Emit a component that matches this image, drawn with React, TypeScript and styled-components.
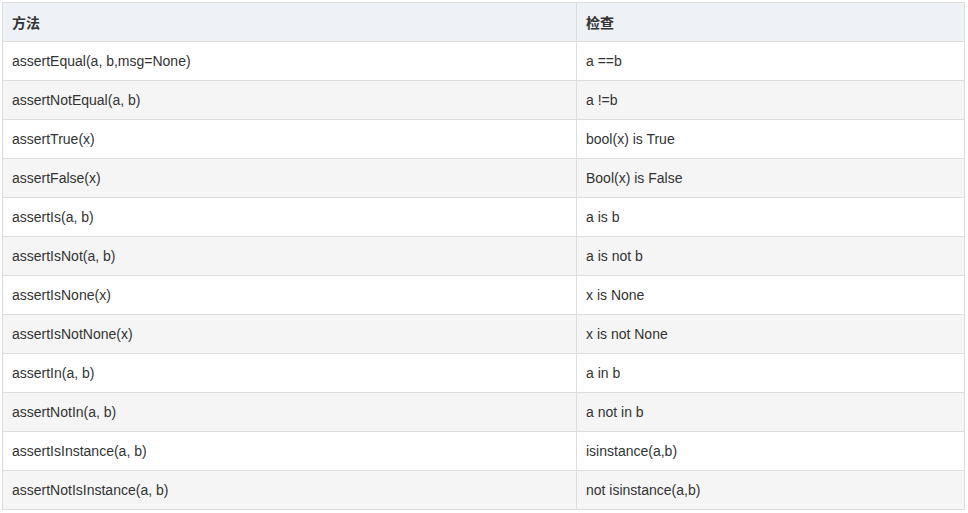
import React from "react";
import styled, { createGlobalStyle } from "styled-components";

const Global = createGlobalStyle`
  html, body { margin: 0; padding: 0; background: #ffffff; }
  body { font-family: "Liberation Sans", Arial, "Noto Sans CJK SC", sans-serif; }
`;

const Page = styled.div`
  padding: 2px 0 0 2px;
`;

const Table = styled.table`
  border-collapse: collapse;
  table-layout: fixed;
  width: 963px;
  border: 1px solid #dddddd;
  font-size: 14px;
  color: #333333;
`;

const HeadCell = styled.th`
  height: 39px;
  padding: 0 9px;
  box-sizing: border-box;
  text-align: left;
  font-weight: bold;
  font-family: "Liberation Sans", Arial, "Noto Sans CJK SC", sans-serif;
  background: #eef1f5;
  border: 1px solid #dddddd;
`;

const Row = styled.tr<{ $striped: boolean }>`
  background: ${(p) => (p.$striped ? "#f5f5f5" : "#ffffff")};
`;

const Cell = styled.td`
  height: 39px;
  padding: 0 9px;
  box-sizing: border-box;
  border: 1px solid #dddddd;
  white-space: nowrap;
`;

const rows: [string, string][] = [
  ["assertEqual(a, b,msg=None)", "a ==b"],
  ["assertNotEqual(a, b)", "a !=b"],
  ["assertTrue(x)", "bool(x) is True"],
  ["assertFalse(x)", "Bool(x) is False"],
  ["assertIs(a, b)", "a is b"],
  ["assertIsNot(a, b)", "a is not b"],
  ["assertIsNone(x)", "x is None"],
  ["assertIsNotNone(x)", "x is not None"],
  ["assertIn(a, b)", "a in b"],
  ["assertNotIn(a, b)", "a not in b"],
  ["assertIsInstance(a, b)", "isinstance(a,b)"],
  ["assertNotIsInstance(a, b)", "not isinstance(a,b)"],
];

export default function App() {
  return (
    <Page>
      <Global />
      <Table>
        <colgroup>
          <col style={{ width: 574 }} />
          <col />
        </colgroup>
        <thead>
          <tr>
            <HeadCell>方法</HeadCell>
            <HeadCell>检查</HeadCell>
          </tr>
        </thead>
        <tbody>
          {rows.map(([m, c], i) => (
            <Row key={m} $striped={i % 2 === 1}>
              <Cell>{m}</Cell>
              <Cell>{c}</Cell>
            </Row>
          ))}
        </tbody>
      </Table>
    </Page>
  );
}
